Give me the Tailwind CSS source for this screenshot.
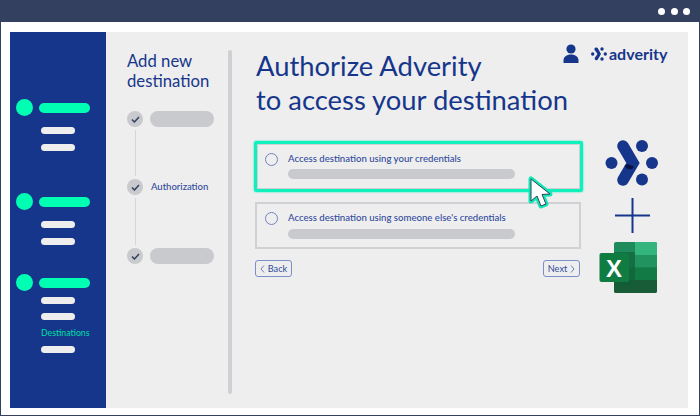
<!DOCTYPE html>
<html lang="en">
<head>
  <meta charset="UTF-8">
  <title>Authorize Adverity</title>
  <script src="https://cdn.jsdelivr.net/npm/@tailwindcss/browser@4"></script>
</head>
<body class="bg-white">
  <div class="relative w-[700px] h-[416px] overflow-hidden flex flex-col bg-white border-x border-b border-[#33405f] font-['Lato','Noto_Sans',sans-serif]">
    <!-- window bar -->
    <div class="h-[22px] shrink-0 bg-[#33405f] flex items-center justify-end gap-[5.5px] pr-[10px] -mx-px">
      <span class="w-[7px] h-[7px] rounded-full bg-white"></span>
      <span class="w-[7px] h-[7px] rounded-full bg-white"></span>
      <span class="w-[7px] h-[7px] rounded-full bg-white"></span>
    </div>

    <div class="flex ml-[9px] mt-[10px] w-[678px] h-[376px] bg-[#eeeeee]">
      <!-- sidebar -->
      <div class="w-[96px] shrink-0 bg-[#16368c] pt-[67px] pl-[6px]">
        <div class="flex items-center gap-[6px]">
          <span class="w-[17px] h-[17px] rounded-full bg-[#00ffb3]"></span>
          <span class="w-[51px] h-[10px] rounded-full bg-[#00ffb3]"></span>
        </div>
        <div class="ml-[25px] mt-[11px] w-[34px] h-[7px] rounded-full bg-[#eeeeee]"></div>
        <div class="ml-[25px] mt-[10px] w-[34px] h-[7px] rounded-full bg-[#eeeeee]"></div>

        <div class="flex items-center gap-[6px] mt-[42px]">
          <span class="w-[17px] h-[17px] rounded-full bg-[#00ffb3]"></span>
          <span class="w-[51px] h-[10px] rounded-full bg-[#00ffb3]"></span>
        </div>
        <div class="ml-[25px] mt-[11px] w-[34px] h-[7px] rounded-full bg-[#eeeeee]"></div>
        <div class="ml-[25px] mt-[10px] w-[34px] h-[7px] rounded-full bg-[#eeeeee]"></div>

        <div class="flex items-center gap-[6px] mt-[29px]">
          <span class="w-[17px] h-[17px] rounded-full bg-[#00ffb3]"></span>
          <span class="w-[51px] h-[10px] rounded-full bg-[#00ffb3]"></span>
        </div>
        <div class="ml-[25px] mt-[6px] w-[34px] h-[7px] rounded-full bg-[#eeeeee]"></div>
        <div class="ml-[25px] mt-[9px] w-[34px] h-[7px] rounded-full bg-[#eeeeee]"></div>
        <div class="ml-[25px] mt-[6px] h-[14px] leading-[14px] text-[8.7px] font-medium text-[#00d7a0]">Destinations</div>
        <div class="ml-[25px] mt-[6px] w-[34px] h-[7px] rounded-full bg-[#eeeeee]"></div>
      </div>

      <!-- steps -->
      <div class="w-[122px] shrink-0 pl-[21px] pt-[19px]">
        <h2 class="text-[16.7px] leading-[20px] text-[#16368c]">Add new<br>destination</h2>
        <div class="mt-[20px] flex items-center gap-[7px]">
          <span class="w-[16px] h-[16px] rounded-full bg-[#c9cace] flex items-center justify-center">
            <svg width="9" height="7" viewBox="0 0 9 7" fill="none" stroke="#33405f" stroke-width="1.5"><path d="M1 3.5 3.4 6 8 1"/></svg>
          </span>
          <span class="w-[64px] h-[16px] rounded-full bg-[#c9cace]"></span>
        </div>
        <div class="ml-[7.5px] w-px h-[46px] mt-[3px] bg-[#d5d6da]"></div>
        <div class="mt-[3px] flex items-center gap-[8px]">
          <span class="w-[16px] h-[16px] rounded-full bg-[#c9cace] flex items-center justify-center">
            <svg width="9" height="7" viewBox="0 0 9 7" fill="none" stroke="#33405f" stroke-width="1.5"><path d="M1 3.5 3.4 6 8 1"/></svg>
          </span>
          <span class="text-[9.5px] leading-[16px] font-medium text-[#2f4a9c]">Authorization</span>
        </div>
        <div class="ml-[7.5px] w-px h-[47px] mt-[3px] bg-[#d5d6da]"></div>
        <div class="mt-[3px] flex items-center gap-[7px]">
          <span class="w-[16px] h-[16px] rounded-full bg-[#c9cace] flex items-center justify-center">
            <svg width="9" height="7" viewBox="0 0 9 7" fill="none" stroke="#33405f" stroke-width="1.5"><path d="M1 3.5 3.4 6 8 1"/></svg>
          </span>
          <span class="w-[64px] h-[16px] rounded-full bg-[#c9cace]"></span>
        </div>
      </div>

      <!-- divider -->
      <div class="w-[4px] shrink-0 h-[344px] mt-[18px] rounded-full bg-[#cfd0d4]"></div>

      <!-- main -->
      <div class="flex-1 pl-[24px] pt-[17px]">
        <h1 class="text-[27.4px] leading-[34px] text-[#16368c]">Authorize Adverity<br>to access your destination</h1>

        <div class="mt-[24px] w-[329px] h-[51px] -ml-[2px] border-[3px] border-[#0ff0bc] rounded-[2px] pl-[8px] pt-[8.5px] shadow-[0_0_2px_#0ff0bc] outline outline-[#d0d1d5] -outline-offset-[4px]">
          <div class="flex items-center gap-[10px] h-[13px]">
            <span class="w-[13px] h-[13px] rounded-full border border-[#7084c2]"></span>
            <span class="text-[9.6px] font-medium text-[#2f4a9c]">Access destination using your credentials</span>
          </div>
          <div class="ml-[23px] mt-[3.5px] w-[227px] h-[9.5px] rounded-full bg-[#c9cace]"></div>
        </div>

        <div class="mt-[10px] w-[326px] h-[47px] -ml-[1px] border-2 border-[#d0d1d5] pl-[8px] pt-[8px]">
          <div class="flex items-center gap-[10px] h-[13px]">
            <span class="w-[13px] h-[13px] rounded-full border border-[#7084c2]"></span>
            <span class="text-[9.6px] font-medium text-[#2f4a9c]">Access destination using someone else's credentials</span>
          </div>
          <div class="ml-[23px] mt-[4px] w-[227px] h-[9.5px] rounded-full bg-[#c9cace]"></div>
        </div>

        <div class="mt-[11px] w-[325px] -ml-[1px] flex justify-between">
          <button class="w-[37px] h-[17px] border border-[#7b8fc9] rounded-[3px] flex items-center justify-center gap-[3px] text-[9.2px] text-[#2f4a9c]">
            <svg width="5" height="8" viewBox="0 0 5 8" fill="none" stroke="#6b7fbc"><path d="M4 .5 1 4l3 3.5"/></svg>Back
          </button>
          <button class="w-[37px] h-[17px] border border-[#7b8fc9] rounded-[3px] flex items-center justify-center gap-[3px] text-[9.2px] text-[#2f4a9c]">
            Next<svg width="5" height="8" viewBox="0 0 5 8" fill="none" stroke="#6b7fbc"><path d="M1 .5 4 4 1 7.500"/></svg>
          </button>
        </div>
      </div>
    </div>

    <!-- user + adverity logo (top right of panel) -->
    <div class="absolute left-[562px] top-[44px] flex items-center gap-[4px]">
      <svg width="16" height="19" viewBox="0 0 16 19" fill="#16368c"><circle cx="8" cy="5" r="4.6"/><path d="M.5 19v-2.5C.5 13 3.5 10.6 8 10.6s7.500 2.400 7.500 5.900V19z"/></svg>
      <svg class="ml-[8px]" width="16" height="14" viewBox="0 0 16 14" fill="#16368c">
        <circle cx="1.700" cy="7" r="1.700"/><circle cx="14.300" cy="7" r="1.700"/><circle cx="11" cy="2" r="1.700"/><circle cx="11" cy="12" r="1.700"/>
        <path d="M5 .5a1.700 1.700 0 0 0-1 3L6.500 7 4 10.500a1.700 1.700 0 0 0 2.800 2L10 7 6.800 1.300A1.700 1.700 0 0 0 5 .5z"/>
      </svg>
      <span class="text-[16px] leading-[18px] font-bold text-[#16368c] -ml-[2px]">adverity</span>
    </div>

    <!-- integration icons -->
    <div class="absolute left-[601px] top-[140px] w-[60px] flex flex-col items-center">
      <svg width="54" height="47" viewBox="0 0 54 47">
        <g fill="#16368c">
          <circle cx="6.500" cy="23" r="6"/><circle cx="47" cy="23" r="6"/><circle cx="37" cy="6" r="6"/><circle cx="37" cy="39.500" r="6"/>
        </g>
        <path d="M18 6 28 23 18 40" fill="none" stroke="#16368c" stroke-width="11.500" stroke-linecap="round" stroke-linejoin="miter"/>
        <path d="M19.500 26c1.500-1.500 3-2 4.500-1.500 1.500.5 3 1.500 5 2l-2 2.500c-2.500.5-4.500 0-5.500-1z" fill="#0b1440"/>
      </svg>
      <svg class="mt-[11px]" width="35" height="35" viewBox="0 0 35 35" stroke="#16368c" stroke-width="2"><path d="M17.500 0v35M0 17.500h35"/></svg>
      <svg class="mt-[9px] self-start -ml-[3px]" width="59" height="52" viewBox="0 0 59 52">
        <rect x="15" y="0" width="43" height="51" rx="2" fill="#1f8a5b"/>
        <path d="M36 0h20a2 2 0 0 1 2 2v11H36z" fill="#33b57d"/>
        <rect x="36" y="13" width="22" height="12.500" fill="#21935f"/>
        <rect x="15" y="25.500" width="43" height="12.500" fill="#127a45"/>
        <path d="M15 38h43v11a2 2 0 0 1-2 2H17a2 2 0 0 1-2-2z" fill="#185c37"/>
        <rect x="15" y="10" width="21" height="34" fill="#0f5c36" opacity=".6"/>
        <rect x="0.500" y="11" width="29.500" height="29" rx="2" fill="#107c41"/>
        <text x="15" y="35" text-anchor="middle" fill="#fff" font-family="Liberation Sans" font-weight="700" font-size="24">X</text>
      </svg>
    </div>

    <!-- mouse cursor -->
    <svg class="absolute left-[526px] top-[176px]" width="27" height="34" viewBox="0 0 27 34">
      <path d="M4 3 L4 25 L10 20 L14 30 L19 28 L15 18.500 L23 18 Z" fill="#0fe8b4" stroke="#0fe8b4" stroke-width="5" stroke-linejoin="round"/>
      <path d="M4 3 L4 25 L10 20 L14 30 L19 28 L15 18.500 L23 18 Z" fill="#fff" stroke="#33405f" stroke-width="1" stroke-linejoin="round"/>
    </svg>
  </div>
</body>
</html>
